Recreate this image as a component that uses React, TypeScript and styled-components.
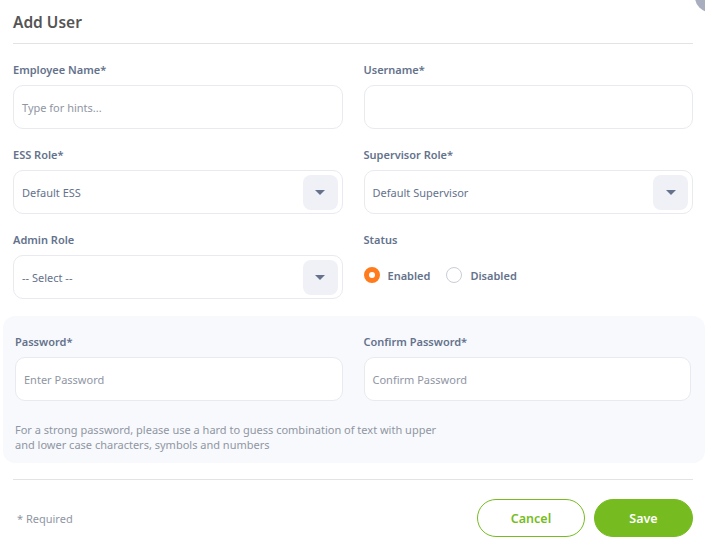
import React from "react";
import styled, { createGlobalStyle } from "styled-components";

const Global = createGlobalStyle`
  html, body { margin: 0; padding: 0; background: #ffffff; }
  body { font-family: "Noto Sans", "Open Sans", "Liberation Sans", sans-serif; -webkit-font-smoothing: antialiased; }
  * { box-sizing: border-box; }
`;

const Page = styled.div`
  position: relative;
  width: 705px;
  height: 541px;
  overflow: hidden;
  padding: 0 12px 0 13px;
`;

const CornerDot = styled.div`
  position: absolute;
  top: -18px;
  right: -20px;
  width: 30px;
  height: 30px;
  border-radius: 50%;
  background: #a9aebf;
`;

const Title = styled.h1`
  margin: 0;
  padding-top: 12px;
  font-size: 15.5px;
  line-height: 20px;
  font-weight: 600;
  color: #555555;
  height: 43px;
`;

const Divider = styled.hr`
  margin: 0;
  border: none;
  border-top: 1px solid #e3e3e3;
`;

const Grid = styled.div<{ $top?: number }>`
  display: grid;
  grid-template-columns: 1fr 1fr;
  column-gap: 21px;
  row-gap: 18px;
  padding-top: ${(p) => p.$top ?? 18}px;
`;

const Field = styled.div`
  display: flex;
  flex-direction: column;
  gap: 8px;
`;

const Label = styled.label`
  font-size: 11px;
  line-height: 15px;
  font-weight: 600;
  color: #64728c;
`;

const InputBox = styled.div<{ $placeholder?: boolean }>`
  position: relative;
  height: 44px;
  border: 1px solid #e8eaef;
  border-radius: 10px;
  background: #ffffff;
  display: flex;
  align-items: center;
  padding: 0 8px;
  font-size: 11px;
  color: ${(p) => (p.$placeholder ? "#8f96a3" : "#64728c")};
`;

const ArrowButton = styled.div`
  position: absolute;
  right: 4px;
  top: 4px;
  width: 35px;
  height: 35px;
  border-radius: 8px;
  background: #f0f1f6;
  display: flex;
  align-items: center;
  justify-content: center;
`;

const Triangle = styled.span`
  width: 0;
  height: 0;
  border-left: 5px solid transparent;
  border-right: 5px solid transparent;
  border-top: 5px solid #64728c;
`;

const RadioRow = styled.div`
  height: 44px;
  display: flex;
  align-items: center;
  padding-bottom: 4px;
  gap: 16px;
`;

const RadioItem = styled.div`
  display: flex;
  align-items: center;
  gap: 8px;
  font-size: 11px;
  font-weight: 600;
  color: #64728c;
`;

const RadioCircle = styled.span<{ $on?: boolean }>`
  width: 16px;
  height: 16px;
  border-radius: 50%;
  background: #ffffff;
  border: ${(p) => (p.$on ? "5px solid #ff7b1d" : "1px solid #c9cdd8")};
`;

const PasswordPanel = styled.div`
  margin: 17px -12px 0 -10px;
  background: #f8f9fc;
  border-radius: 12px;
  padding: 18px 14px 11px 12px;
`;

const Hint = styled.p`
  margin: 21px 0 0;
  font-size: 11px;
  line-height: 15px;
  color: #8f96a3;
  max-width: 438px;
`;

const BottomDivider = styled(Divider)`
  margin-top: 16px;
`;

const Footer = styled.div`
  display: flex;
  align-items: center;
  justify-content: space-between;
  padding-top: 19px;
`;

const Required = styled.span`
  padding-left: 4px;
  font-size: 11px;
  color: #8f96a3;
`;

const Buttons = styled.div`
  display: flex;
  gap: 9px;
`;

const Button = styled.button<{ $primary?: boolean; $w: number }>`
  width: ${(p) => p.$w}px;
  height: 38px;
  border-radius: 20px;
  font-family: inherit;
  font-size: 12.5px;
  font-weight: 600;
  border: 1px solid #76bc21;
  background: ${(p) => (p.$primary ? "#76bc21" : "#ffffff")};
  color: ${(p) => (p.$primary ? "#ffffff" : "#76bc21")};
  cursor: pointer;
`;

const Select = ({ value, placeholder }: { value: string; placeholder?: boolean }) => (
  <InputBox $placeholder={placeholder}>
    {value}
    <ArrowButton>
      <Triangle />
    </ArrowButton>
  </InputBox>
);

export default function App() {
  return (
    <>
      <Global />
      <Page>
        <CornerDot />
        <Title>Add User</Title>
        <Divider />
        <Grid>
          <Field>
            <Label>Employee Name*</Label>
            <InputBox $placeholder>Type for hints...</InputBox>
          </Field>
          <Field>
            <Label>Username*</Label>
            <InputBox />
          </Field>
          <Field>
            <Label>ESS Role*</Label>
            <Select value="Default ESS" />
          </Field>
          <Field>
            <Label>Supervisor Role*</Label>
            <Select value="Default Supervisor" />
          </Field>
          <Field>
            <Label>Admin Role</Label>
            <Select value="-- Select --" />
          </Field>
          <Field>
            <Label>Status</Label>
            <RadioRow>
              <RadioItem>
                <RadioCircle $on />
                Enabled
              </RadioItem>
              <RadioItem>
                <RadioCircle />
                Disabled
              </RadioItem>
            </RadioRow>
          </Field>
        </Grid>
        <PasswordPanel>
          <Grid $top={0}>
            <Field>
              <Label>Password*</Label>
              <InputBox $placeholder>Enter Password</InputBox>
            </Field>
            <Field>
              <Label>Confirm Password*</Label>
              <InputBox $placeholder>Confirm Password</InputBox>
            </Field>
          </Grid>
          <Hint>
            For a strong password, please use a hard to guess combination of text with upper
            and lower case characters, symbols and numbers
          </Hint>
        </PasswordPanel>
        <BottomDivider />
        <Footer>
          <Required>* Required</Required>
          <Buttons>
            <Button $w={108}>Cancel</Button>
            <Button $w={99} $primary>
              Save
            </Button>
          </Buttons>
        </Footer>
      </Page>
    </>
  );
}
